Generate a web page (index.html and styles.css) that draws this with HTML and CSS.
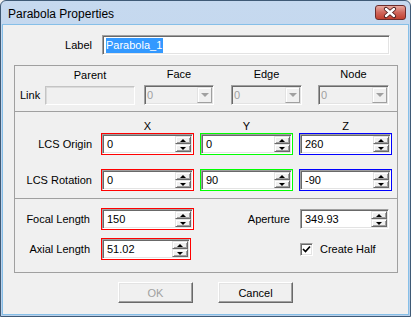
FILE: index.html
```html
<!DOCTYPE html>
<html lang="en">

<head>
  <meta charset="UTF-8" />
  <title>Parabola Properties</title>
  <link rel="stylesheet" href="styles.css">
</head>

<body>
  <div class="window">
    <!-- Title bar -->
    <div class="titlebar">
      <span class="title">Parabola Properties</span>
      <div class="close">
        <svg width="30" height="15" viewBox="0 0 30 15">
          <path d="M11 4 L19 11 M19 4 L11 11" stroke="#4a1c1c" stroke-width="4.2" stroke-linecap="round" fill="none" />
          <path d="M11 4 L19 11 M19 4 L11 11" stroke="#fff" stroke-width="2.4" stroke-linecap="round" fill="none" />
        </svg>
      </div>
    </div>

    <div class="client">
      <!-- Label -->
      <div class="label-row">
        <span class="caption">Label</span>
        <div class="edit wide"><span class="sel">Parabola_1</span></div>
      </div>

      <div class="panel">
        <!-- Link -->
        <div class="section link">
          <span class="link-label">Link</span>
          <div class="col parent">
            <span class="head">Parent</span>
            <div class="edit disabled"></div>
          </div>
          <div class="col face">
            <span class="head">Face</span>
            <div class="combo"><span class="val">0</span><span class="drop"></span></div>
          </div>
          <div class="col edge">
            <span class="head">Edge</span>
            <div class="combo"><span class="val">0</span><span class="drop"></span></div>
          </div>
          <div class="col node">
            <span class="head">Node</span>
            <div class="combo"><span class="val">0</span><span class="drop"></span></div>
          </div>
        </div>

        <!-- LCS -->
        <div class="section lcs">
          <div class="vec-row head-row">
            <span></span>
            <span class="head">X</span>
            <span class="head">Y</span>
            <span class="head">Z</span>
          </div>
          <div class="vec-row">
            <span class="row-label">LCS Origin</span>
            <div class="frame red"><div class="spin"><span class="val">0</span><span class="arrows"><span class="arr up"></span><span class="arr down"></span></span></div></div>
            <div class="frame green"><div class="spin"><span class="val">0</span><span class="arrows"><span class="arr up"></span><span class="arr down"></span></span></div></div>
            <div class="frame blue"><div class="spin"><span class="val">260</span><span class="arrows"><span class="arr up"></span><span class="arr down"></span></span></div></div>
          </div>
          <div class="vec-row">
            <span class="row-label">LCS Rotation</span>
            <div class="frame red"><div class="spin"><span class="val">0</span><span class="arrows"><span class="arr up"></span><span class="arr down"></span></span></div></div>
            <div class="frame green"><div class="spin"><span class="val">90</span><span class="arrows"><span class="arr up"></span><span class="arr down"></span></span></div></div>
            <div class="frame blue"><div class="spin"><span class="val">-90</span><span class="arrows"><span class="arr up"></span><span class="arr down"></span></span></div></div>
          </div>
        </div>

        <!-- Parameters -->
        <div class="section params">
          <span class="row-label focal">Focal Length</span>
          <div class="frame red"><div class="spin"><span class="val">150</span><span class="arrows"><span class="arr up"></span><span class="arr down"></span></span></div></div>
          <span class="row-label aperture">Aperture</span>
          <div class="spin loose"><span class="val">349.93</span><span class="arrows"><span class="arr up"></span><span class="arr down"></span></span></div>

          <span class="row-label focal">Axial Length</span>
          <div class="frame red axial"><div class="spin"><span class="val">51.02</span><span class="arrows"><span class="arr up"></span><span class="arr down"></span></span></div></div>
          <span></span>
          <label class="check-row">
            <span class="check">
              <svg width="9" height="9" viewBox="0 0 9 9">
                <path d="M1 4 L3.5 6.5 L8 1.5" stroke="#000" stroke-width="1.7" fill="none" />
              </svg>
            </span>
            Create Half
          </label>
        </div>
      </div>

      <!-- Buttons -->
      <div class="buttons">
        <button class="btn" disabled>OK</button>
        <button class="btn">Cancel</button>
      </div>
    </div>
  </div>
</body>

</html>
```

FILE: styles.css
```css
* {
  box-sizing: border-box;
  margin: 0;
  padding: 0;
}

body {
  font-family: "Liberation Sans", Arial, sans-serif;
  font-size: 11px;
  color: #000;
  background-color: #f0f0f0;
}

/* Window frame */
.window {
  width: 411px;
  height: 317px;
  border: 1px solid #3f5a76;
  border-radius: 6px 6px 0 0;
  background: linear-gradient(#c6d9ef, #b9d0ea);
  display: flex;
  flex-direction: column;
  overflow: hidden;
}

.titlebar {
  height: 24px;
  display: flex;
  justify-content: space-between;
  padding: 0 4px 0 7px;
}

.title {
  font-size: 12px;
  line-height: 26px;
}

.close {
  width: 31px;
  height: 15px;
  margin-top: 4px;
  border: 1px solid #6b2c2c;
  border-radius: 3px;
  background: linear-gradient(#e8a99f, #d0675c 50%, #c2402f);
  display: flex;
}

.close svg {
  margin-left: -1px;
  margin-top: -1px;
}

.client {
  flex: 1;
  margin: 0 2px 2px;
  background-color: #f0f0f0;
  box-shadow: 0 0 0 1px #86bfe8;
  padding-top: 10px;
  display: flex;
  flex-direction: column;
}

/* Sunken fields */
.edit,
.spin,
.combo,
.check {
  border: 1px solid;
  border-color: #a0a0a0 #fff #fff #a0a0a0;
  box-shadow: inset 1px 1px #696969, inset -1px -1px #e3e3e3;
  background-color: #fff;
}

.label-row {
  display: flex;
  align-items: center;
  gap: 10px;
}

.label-row .caption {
  width: 89px;
  text-align: right;
}

.edit.wide {
  width: 288px;
  height: 20px;
  padding: 1px 3px;
  line-height: 16px;
}

.sel {
  display: inline-block;
  background-color: #3399ff;
  color: #fff;
  line-height: 15px;
  padding-right: 1px;
}

/* Group panel */
.panel {
  margin: 10px 10px 0 11px;
  border: 1px solid #a0a0a0;
}

.section + .section {
  border-top: 1px solid #a0a0a0;
}

.head {
  text-align: center;
  line-height: 13px;
}

/* Link section */
.section.link {
  display: flex;
  align-items: flex-end;
  padding: 2px 0 6px 5px;
}

.link-label {
  width: 25px;
  line-height: 20px;
}

.col {
  display: flex;
  flex-direction: column;
  gap: 4px;
}

.col.parent {
  width: 90px;
}

.col.face {
  width: 70px;
  margin-left: 9px;
}

.col.edge {
  width: 71px;
  margin-left: 17px;
}

.col.node {
  width: 71px;
  margin-left: 16px;
}

.edit.disabled {
  height: 19px;
  background-color: #f0f0f0;
  border-color: #c4c4c4 #fff #fff #c4c4c4;
  box-shadow: inset 1px 1px #dadada;
}

.combo {
  height: 20px;
  padding: 1px;
  display: flex;
  background-color: #f0f0f0;
}

.combo .val {
  flex: 1;
  color: #a0a0a0;
  padding-left: 1px;
  line-height: 16px;
}

.drop {
  width: 15px;
  display: flex;
  align-items: center;
  justify-content: center;
  background-color: #f0f0f0;
  border: 1px solid;
  border-color: #e3e3e3 #a0a0a0 #a0a0a0 #e3e3e3;
  box-shadow: inset 1px 1px #fff;
}

.drop::after {
  content: "";
  border-left: 4px solid transparent;
  border-right: 4px solid transparent;
  border-top: 4px solid #a0a0a0;
}

/* LCS section */
.section.lcs {
  padding: 7px 0;
  display: flex;
  flex-direction: column;
}

.vec-row {
  display: grid;
  grid-template-columns: 80px 93px 93px 93px;
  column-gap: 6px;
  align-items: center;
}

.head-row {
  height: 14px;
}

.vec-row + .vec-row:not(.head-row) {
  margin-top: 14px;
}

.head-row + .vec-row {
  margin-top: 0 !important;
}

.row-label {
  text-align: right;
  padding-right: 3px;
}

/* Colored frames round the spin boxes */
.frame {
  border: 1px solid;
}

.frame.red {
  border-color: #ff0000;
}

.frame.green {
  border-color: #00ff00;
}

.frame.blue {
  border-color: #0000ff;
}

.spin {
  height: 20px;
  padding: 1px;
  display: flex;
}

.spin .val {
  flex: 1;
  padding-left: 3px;
  line-height: 16px;
}

.arrows {
  width: 16px;
  display: flex;
  flex-direction: column;
}

.arr {
  flex: 1;
  display: flex;
  align-items: center;
  justify-content: center;
  background-color: #f0f0f0;
  border: 1px solid;
  border-color: #e3e3e3 #696969 #696969 #e3e3e3;
  box-shadow: inset 1px 1px #fff, inset -1px -1px #a0a0a0;
}

.arr.up::after {
  content: "";
  border-left: 3px solid transparent;
  border-right: 3px solid transparent;
  border-bottom: 3px solid #000;
}

.arr.down::after {
  content: "";
  border-left: 3px solid transparent;
  border-right: 3px solid transparent;
  border-top: 3px solid #000;
}

/* Parameters section */
.section.params {
  display: grid;
  grid-template-columns: 80px 93px 93px 93px;
  grid-template-rows: 22px 22px;
  column-gap: 6px;
  row-gap: 8px;
  align-items: center;
  padding: 9px 0 12px;
}

.row-label.focal {
  padding-right: 5px;
}

.frame.axial {
  width: 90px;
}

.spin.loose {
  width: 89px;
  margin-left: 1px;
}

.check-row {
  display: flex;
  align-items: center;
  gap: 7px;
  margin-left: 1px;
  white-space: nowrap;
}

.check {
  width: 13px;
  height: 13px;
  display: flex;
  align-items: center;
  justify-content: center;
}

/* Buttons */
.buttons {
  display: flex;
  justify-content: center;
  gap: 25px;
  margin-top: 9px;
}

.btn {
  width: 75px;
  height: 21px;
  font: inherit;
  color: #000;
  background-color: #f0f0f0;
  border: 1px solid;
  border-color: #fff #696969 #696969 #fff;
  box-shadow: inset -1px -1px #a0a0a0, inset 1px 1px #e3e3e3;
}

.btn:disabled {
  color: #a0a0a0;
}
```
